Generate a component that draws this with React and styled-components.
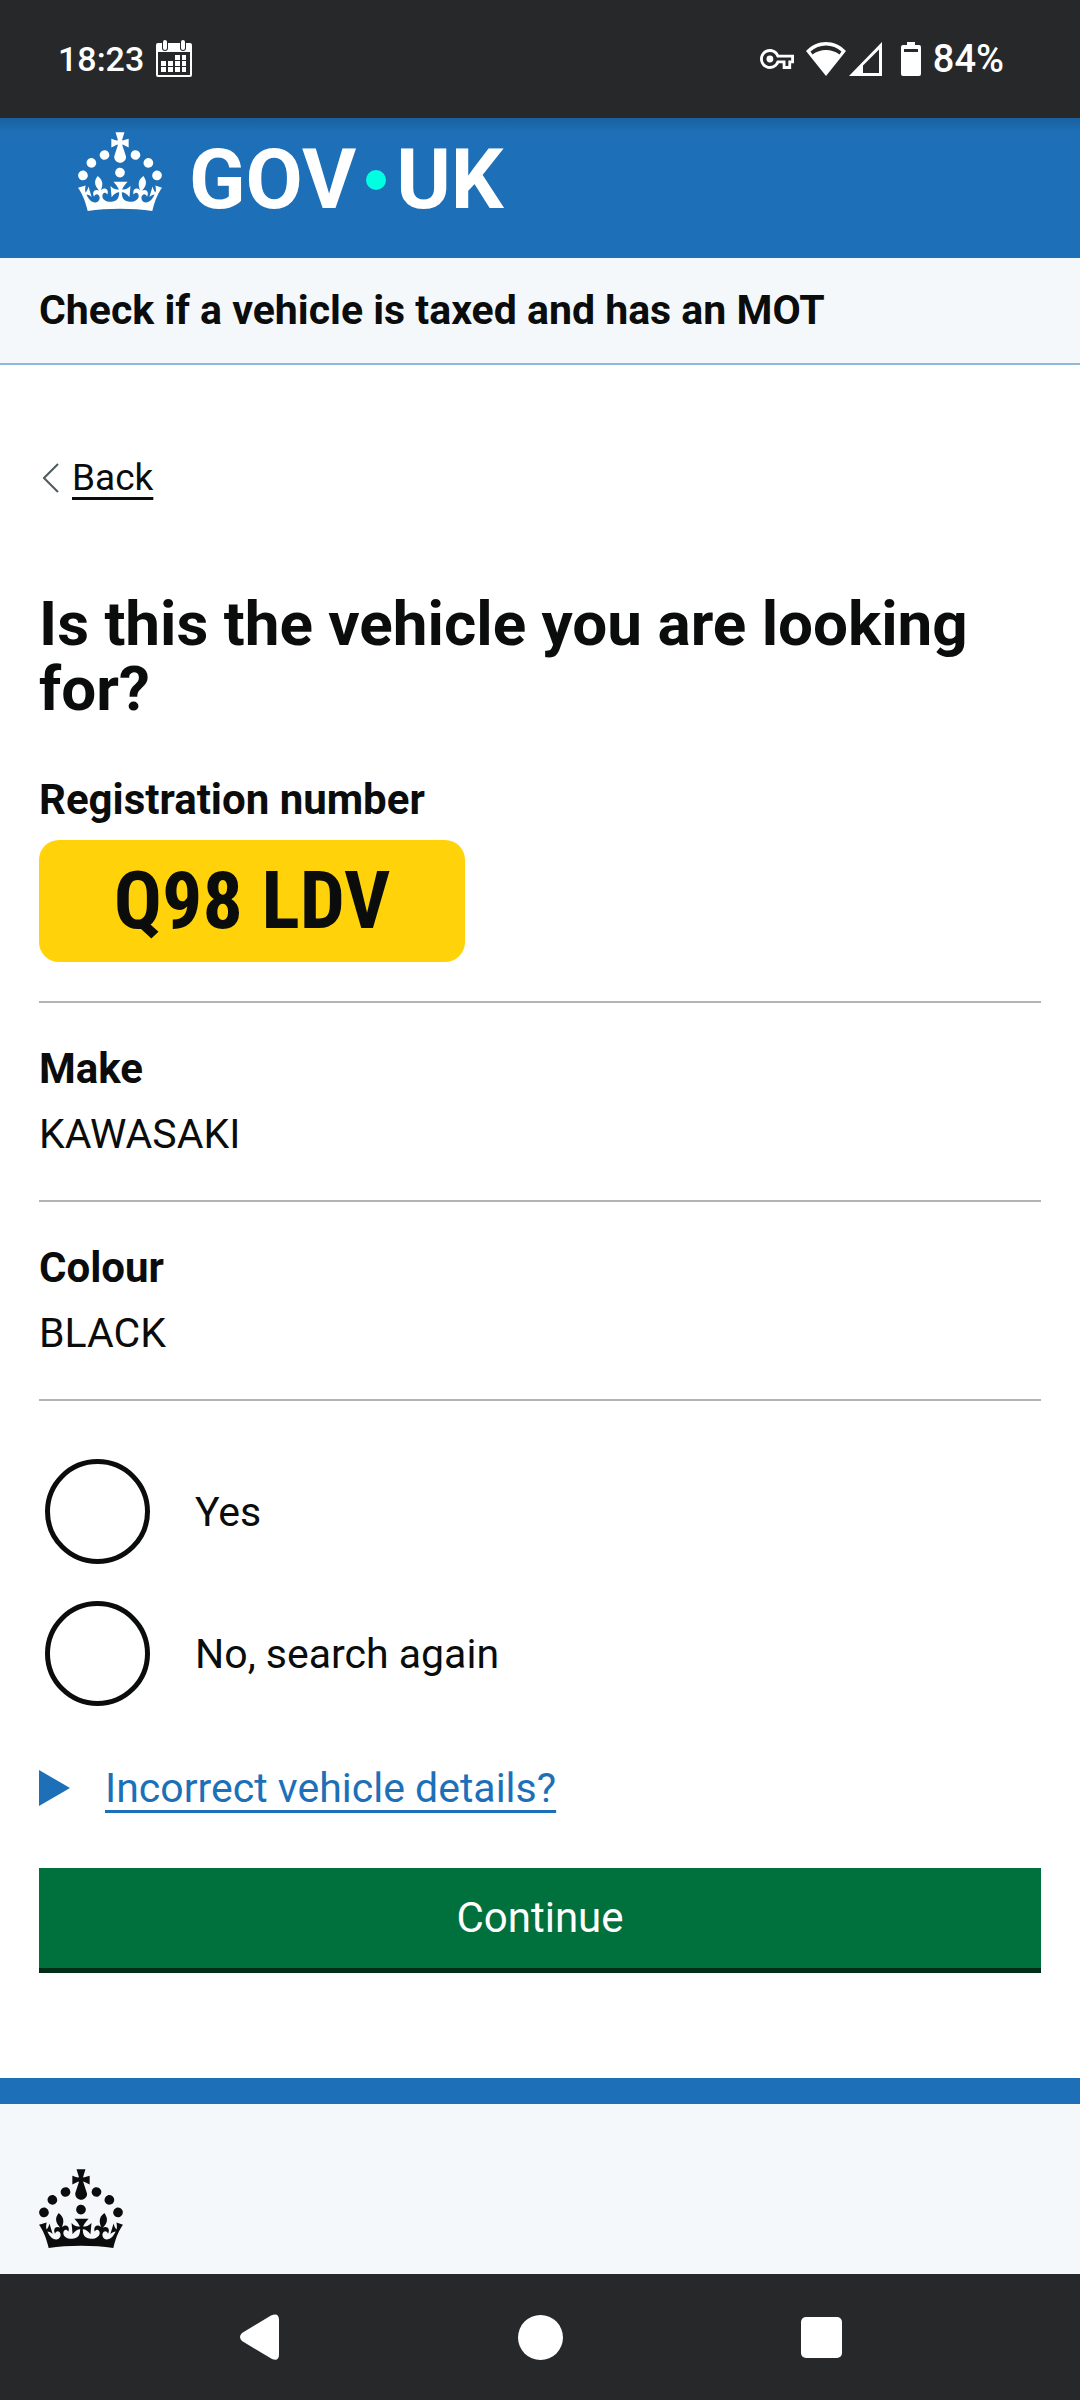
import React from 'react';
import styled, { createGlobalStyle } from 'styled-components';

const GlobalStyle = createGlobalStyle`
    * {
        box-sizing: border-box;
    }

    body {
        margin: 0;
        background-color: #fff;
        color: #0b0c0c;
        font-family: Roboto, 'Liberation Sans', sans-serif;
        font-size: 41px;
        line-height: 60px;
    }
`;

const Screen = styled.div`
    display: flex;
    flex-direction: column;
    min-height: 100vh;
`;

/* Android status bar */
const StatusBar = styled.div`
    display: flex;
    align-items: center;
    justify-content: space-between;
    height: 118px;
    padding: 0 76px 0 58px;
    background-color: #27282a;
    color: #fff;
    font-weight: 500;
`;

const StatusGroup = styled.div`
    display: flex;
    align-items: center;
    gap: ${(props) => props.$gap}px;
`;

const StatusText = styled.span`
    font-size: ${(props) => props.$size}px;
`;

const Icon = styled.svg`
    display: block;
    flex: none;
    fill: currentColor;
`;

const Header = styled.header`
    height: 140px;
    padding: 14px 78px;
    background: linear-gradient(rgba(0, 0, 0, 0.14), rgba(0, 0, 0, 0) 14px) #1d70b8;
    color: #fff;
`;

const LogoLink = styled.a`
    display: inline-flex;
    gap: 27px;
    color: inherit;
    text-decoration: none;
`;

const Wordmark = styled.span`
    display: flex;
    align-items: center;
    gap: 10px;
    font-size: 83px;
    font-weight: 700;
    line-height: 96px;
`;

const Dot = styled.span`
    width: 20px;
    height: 20px;
    border-radius: 50%;
    background-color: #00ffe0;
`;

const ServiceBar = styled.nav`
    padding: 22px 39px 23px;
    background-color: #f4f8fb;
    border-bottom: 2px solid #8eb8dc;

    a {
        color: #0b0c0c;
        font-weight: 700;
        text-decoration: none;
    }
`;

const Main = styled.main`
    padding: 83px 39px 110px;
`;

const BackLink = styled.a`
    display: flex;
    align-items: center;
    gap: 13px;
    width: fit-content;
    padding-left: 4px;
    color: #0b0c0c;
    font-size: 37px;
    text-decoration: none;

    svg {
        color: #505a5f;
    }

    span {
        text-decoration: underline;
        text-decoration-thickness: 3px;
        text-decoration-skip-ink: none;
        text-underline-offset: 7px;
    }
`;

const Title = styled.h1`
    margin: 83px 0 49px;
    font-size: 62px;
    line-height: 65px;
`;

const SummaryList = styled.dl`
    margin: 0;
`;

const SummaryRow = styled.div`
    padding: 36px 0;
    border-bottom: 2px solid #b1b4b6;

    &:first-child {
        padding-top: 0;
    }

    dt {
        margin-bottom: 5px;
        font-size: 42px;
        font-weight: 700;
    }

    dd {
        margin: 0;
    }
`;

const Plate = styled.span`
    display: inline-block;
    margin: 5px 0 3px;
    min-width: 426px;
    border-radius: 20px;
    background-color: #ffd20a;
    font-family: 'Roboto Condensed', Roboto, sans-serif;
    font-size: 80px;
    font-weight: 700;
    line-height: 122px;
    text-align: center;
    vertical-align: top;
`;

const RadioGroup = styled.fieldset`
    display: grid;
    gap: 37px;
    margin: 58px 0 52px;
    padding: 0 6px;
    border: 0;
`;

const RadioItem = styled.div`
    display: flex;
    align-items: center;
    gap: 45px;
`;

const Radio = styled.input`
    appearance: none;
    flex: none;
    width: 105px;
    height: 105px;
    margin: 0;
    border: 5px solid #0b0c0c;
    border-radius: 50%;
    background-color: #fff;

    &:checked {
        box-shadow: inset 0 0 0 22px #fff;
        background-color: #0b0c0c;
    }
`;

const Details = styled.details`
    margin-bottom: 50px;

    summary {
        display: flex;
        align-items: center;
        gap: 35px;
        color: #1d70b8;
        list-style: none;
        cursor: pointer;
    }

    span {
        text-decoration: underline;
        text-decoration-thickness: 3px;
        text-decoration-skip-ink: none;
        text-underline-offset: 8px;
    }
`;

const ContinueButton = styled.button`
    display: block;
    width: 100%;
    height: 100px;
    padding: 0;
    border: 0;
    background-color: #00703c;
    box-shadow: 0 5px 0 #002d18;
    color: #fff;
    font: inherit;
    font-size: 42px;
`;

const Footer = styled.footer`
    flex: 1;
    padding: 65px 39px 26px;
    background-color: #f4f8fb;
    border-top: 26px solid #1d70b8;
`;

const NavBar = styled.div`
    display: flex;
    align-items: center;
    justify-content: center;
    gap: 238px;
    height: 126px;
    background-color: #27282a;
`;

const NavButton = styled.button`
    padding: 0;
    border: 0;
    background: none;
    color: #fff;
`;

const Crown = () => (
    <Icon width="84" height="79" viewBox="0 0 32 30" aria-hidden="true">
        <path d="M22.6 10.4c-1 .4-2-.1-2.4-1-.4-.9.1-2 1-2.4.9-.4 2 .1 2.4 1s-.1 2-1 2.4m-5.9 6.7c-.9.4-2-.1-2.4-1-.4-.9.1-2 1-2.4.9-.4 2 .1 2.4 1s-.1 2-1 2.4m10.8-3.7c-1 .4-2-.1-2.4-1-.4-.9.1-2 1-2.4.9-.4 2 .1 2.4 1s0 2-1 2.4m3.3 4.8c-1 .4-2-.1-2.4-1-.4-.9.1-2 1-2.4.9-.4 2 .1 2.4 1s-.1 2-1 2.4M17 4.7l2.3 1.2V2.5l-2.3.7-.2-.2.9-3h-3.4l.9 3-.2.2c-.1.1-2.3-.7-2.3-.7v3.4L15 4.7c.1.1.1.2.2.2l-1.3 4c-.1.2-.1.4-.1.6 0 1.1.8 2 1.9 2.2h.7c1-.2 1.9-1.1 1.9-2.1 0-.2 0-.4-.1-.6l-1.3-4c-.1-.2 0-.2.1-.3m-7.6 5.7c.9.4 2-.1 2.4-1 .4-.9-.1-2-1-2.4-.9-.4-2 .1-2.4 1s0 2 1 2.4m-5 3c.9.4 2-.1 2.4-1 .4-.9-.1-2-1-2.4-.9-.4-2 .1-2.4 1s.1 2 1 2.4m-3.2 4.8c.9.4 2-.1 2.4-1 .4-.9-.1-2-1-2.4-.9-.4-2 .1-2.4 1s0 2 1 2.4m14.8 11c4.4 0 8.6.3 12.3.8 1.1-4.5 2.4-7 3.7-8.8l-2.5-.9c.2 1.3.3 1.9 0 2.7-.4-.4-.8-1.1-1.1-2.3l-1.2 4c.7-.5 1.3-.8 2-.9-1.1 2.5-2.6 3.1-3.5 3-1.1-.2-1.7-1.2-1.5-2.1.3-1.2 1.5-1.5 2.1-.1 1.1-2.3-.8-3-2-2.3 1.9-1.9 2.1-3.5.6-5.6-2.1 1.6-2.1 3.2-1.2 5.5-1.2-1.4-3.2-.6-2.5 1.6.9-1.4 2.1-.5 1.9.8-.2 1.1-1.7 2.1-3.5 1.9-2.7-.2-2.9-2.1-2.9-3.6.7-.1 1.9.5 2.9 1.9l.4-4.3c-1.1 1.1-2.1 1.4-3.2 1.4.4-1.2 2.1-3 2.1-3h-5.4s1.7 1.9 2.1 3c-1.1 0-2.1-.2-3.2-1.4l.4 4.3c1-1.4 2.2-2 2.9-1.9-.1 1.5-.2 3.4-2.9 3.6-1.9.2-3.4-.8-3.5-1.9-.2-1.3 1-2.2 1.9-.8.7-2.3-1.2-3-2.5-1.6.9-2.2.9-3.9-1.2-5.5-1.5 2-1.3 3.7.6 5.6-1.2-.7-3.1 0-2 2.3.6-1.4 1.8-1.1 2.1.1.2.9-.3 1.9-1.5 2.1-.9.2-2.4-.5-3.5-3 .6 0 1.2.3 2 .9l-1.2-4c-.3 1.1-.7 1.9-1.1 2.3-.3-.8-.2-1.4 0-2.7l-2.9.9C1.3 23 2.6 25.5 3.7 30c3.7-.5 7.9-.8 12.3-.8" />
    </Icon>
);

const CalendarIcon = () => (
    <Icon width="36" height="38" viewBox="0 0 36 38" aria-hidden="true">
        <path fillRule="evenodd" d="M0 5a2 2 0 0 1 2-2h32a2 2 0 0 1 2 2v30a2 2 0 0 1-2 2H2a2 2 0 0 1-2-2zM2 12v23h32V12z" />
        <rect x="6" y="-1" width="6" height="12" rx="3" fill="#27282a" />
        <rect x="24" y="-1" width="6" height="12" rx="3" fill="#27282a" />
        <rect x="7" y="0" width="4" height="10" rx="2" />
        <rect x="25" y="0" width="4" height="10" rx="2" />
        <path d="M19 15h5v5h-5zM26 15h4v5h-4zM5 21h5v5H5zM12 21h5v5h-5zM19 21h5v5h-5zM26 21h4v5h-4zM5 27h5v5H5zM12 27h5v5h-5zM19 27h5v5h-5zM26 27h4v5h-4z" />
    </Icon>
);

const KeyIcon = () => (
    <Icon width="34" height="20" viewBox="0 5 24 14" aria-hidden="true">
        <path d="M22 19h-6v-4h-2.700C12.170 17.420 9.720 19 7 19c-3.860 0-7-3.140-7-7s3.140-7 7-7c2.720 0 5.170 1.580 6.320 4H24v6h-2v4zm-4-2h2v-4h2v-2H11.940l-.23-.67C11.010 8.340 9.110 7 7 7c-2.760 0-5 2.240-5 5s2.240 5 5 5c2.110 0 4.010-1.340 4.710-3.330l.23-.67H18v4z" />
        <circle cx="7" cy="12" r="2.400" />
    </Icon>
);

const WifiIcon = () => (
    <Icon width="40" height="34" viewBox="0 0 40 34" aria-hidden="true">
        <path fillRule="evenodd" d="M0 9C11-3 29-3 40 9L20 34zM4.500 9.500L6.500 12.500C14 6.500 26 6.500 33.500 12.500L35.500 9.500C27 1.500 13 1.500 4.500 9.500z" />
    </Icon>
);

const SignalIcon = () => (
    <Icon width="33" height="34" viewBox="0 0 33 34" aria-hidden="true">
        <path fillRule="evenodd" d="M0 34L33 0v34zM14 23.500V31h16V7.500z" />
    </Icon>
);

const BatteryIcon = () => (
    <Icon width="20" height="34" viewBox="0 0 20 34" aria-hidden="true">
        <path fillRule="evenodd" d="M6 0h8v3h4a2 2 0 0 1 2 2v27a2 2 0 0 1-2 2H2a2 2 0 0 1-2-2V5a2 2 0 0 1 2-2h4zM3 7v3h14V7z" />
    </Icon>
);

const App = () => {
    return (
        <Screen>
            <GlobalStyle />
            <StatusBar>
                <StatusGroup $gap={12}>
                    <StatusText $size={34}>18:23</StatusText>
                    <CalendarIcon />
                </StatusGroup>
                <StatusGroup $gap={19}>
                    <StatusGroup $gap={12}>
                        <KeyIcon />
                        <StatusGroup $gap={3}>
                            <WifiIcon />
                            <SignalIcon />
                        </StatusGroup>
                    </StatusGroup>
                    <StatusGroup $gap={12}>
                        <BatteryIcon />
                        <StatusText $size={38}>84%</StatusText>
                    </StatusGroup>
                </StatusGroup>
            </StatusBar>
            <Header>
                <LogoLink href="#" aria-label="GOV.UK">
                    <Crown />
                    <Wordmark>
                        <span>GOV</span>
                        <Dot />
                        <span>UK</span>
                    </Wordmark>
                </LogoLink>
            </Header>
            <ServiceBar>
                <a href="#">Check if a vehicle is taxed and has an MOT</a>
            </ServiceBar>
            <Main>
                <BackLink href="#">
                    <Icon width="16" height="30" viewBox="0 0 16 30" aria-hidden="true">
                        <path d="M15 1L1 15l14 14" fill="none" stroke="currentColor" strokeWidth="2" />
                    </Icon>
                    <span>Back</span>
                </BackLink>
                <Title>Is this the vehicle you are looking for?</Title>
                <SummaryList>
                    <SummaryRow>
                        <dt>Registration number</dt>
                        <dd><Plate>Q98 LDV</Plate></dd>
                    </SummaryRow>
                    <SummaryRow>
                        <dt>Make</dt>
                        <dd>KAWASAKI</dd>
                    </SummaryRow>
                    <SummaryRow>
                        <dt>Colour</dt>
                        <dd>BLACK</dd>
                    </SummaryRow>
                </SummaryList>
                <RadioGroup aria-label="Is this the vehicle you are looking for?">
                    <RadioItem>
                        <Radio type="radio" id="correct-yes" name="correct" value="yes" />
                        <label htmlFor="correct-yes">Yes</label>
                    </RadioItem>
                    <RadioItem>
                        <Radio type="radio" id="correct-no" name="correct" value="no" />
                        <label htmlFor="correct-no">No, search again</label>
                    </RadioItem>
                </RadioGroup>
                <Details>
                    <summary>
                        <Icon width="31" height="36" viewBox="0 0 31 36" aria-hidden="true">
                            <path d="M0 0l31 18L0 36z" />
                        </Icon>
                        <span>Incorrect vehicle details?</span>
                    </summary>
                </Details>
                <ContinueButton type="submit">Continue</ContinueButton>
            </Main>
            <Footer>
                <Crown />
            </Footer>
            <NavBar>
                <NavButton aria-label="Back">
                    <Icon width="41" height="46" viewBox="0 0 41 46">
                        <path d="M32 1.500Q40 -2 40 6v34q0 8 -7 5L3 27q-4-4 0-8z" />
                    </Icon>
                </NavButton>
                <NavButton aria-label="Home">
                    <Icon width="45" height="45" viewBox="0 0 45 45">
                        <circle cx="22.500" cy="22.500" r="22.500" />
                    </Icon>
                </NavButton>
                <NavButton aria-label="Recent apps">
                    <Icon width="41" height="41" viewBox="0 0 41 41">
                        <rect width="41" height="41" rx="5" />
                    </Icon>
                </NavButton>
            </NavBar>
        </Screen>
    );
};

export default App;
